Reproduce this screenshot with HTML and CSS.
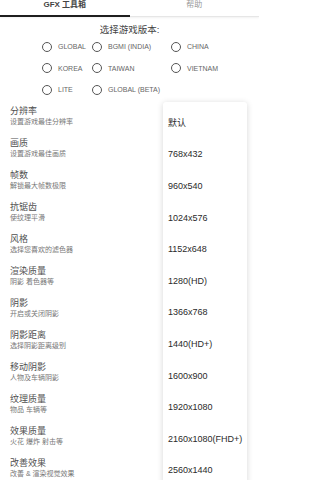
FILE: index.html
```html
<!DOCTYPE html>
<html lang="zh">
<head>
<meta charset="utf-8">
<title>GFX 工具箱</title>
<link rel="stylesheet" href="styles.css">
</head>
<body>
<div class="page">
  <nav class="tabs">
    <div class="tab active">GFX 工具箱</div>
    <div class="tab">帮助</div>
  </nav>

  <h2 class="version-title">选择游戏版本:</h2>
  <div class="radios">
    <label class="radio"><span class="circle"></span>GLOBAL</label>
    <label class="radio"><span class="circle"></span>BGMI (INDIA)</label>
    <label class="radio"><span class="circle"></span>CHINA</label>
    <label class="radio"><span class="circle"></span>KOREA</label>
    <label class="radio"><span class="circle"></span>TAIWAN</label>
    <label class="radio"><span class="circle"></span>VIETNAM</label>
    <label class="radio"><span class="circle"></span>LITE</label>
    <label class="radio"><span class="circle"></span>GLOBAL (BETA)</label>
  </div>

  <ul class="settings">
    <li class="setting"><div class="s-title">分辨率</div><div class="s-sub">设置游戏最佳分辨率</div></li>
    <li class="setting"><div class="s-title">画质</div><div class="s-sub">设置游戏最佳画质</div></li>
    <li class="setting"><div class="s-title">帧数</div><div class="s-sub">解锁最大帧数极限</div></li>
    <li class="setting"><div class="s-title">抗锯齿</div><div class="s-sub">使纹理平滑</div></li>
    <li class="setting"><div class="s-title">风格</div><div class="s-sub">选择您喜欢的滤色器</div></li>
    <li class="setting"><div class="s-title">渲染质量</div><div class="s-sub">阴影 着色器等</div></li>
    <li class="setting"><div class="s-title">阴影</div><div class="s-sub">开启或关闭阴影</div></li>
    <li class="setting"><div class="s-title">阴影距离</div><div class="s-sub">选择阴影距离级别</div></li>
    <li class="setting"><div class="s-title">移动阴影</div><div class="s-sub">人物及车辆阴影</div></li>
    <li class="setting"><div class="s-title">纹理质量</div><div class="s-sub">物品 车辆等</div></li>
    <li class="setting"><div class="s-title">效果质量</div><div class="s-sub">火花 爆炸 射击等</div></li>
    <li class="setting"><div class="s-title">改善效果</div><div class="s-sub">改善 &amp; 渲染视觉效果</div></li>
  </ul>

  <ul class="menu">
    <li class="menu-item">默认</li>
    <li class="menu-item">768x432</li>
    <li class="menu-item">960x540</li>
    <li class="menu-item">1024x576</li>
    <li class="menu-item">1152x648</li>
    <li class="menu-item">1280(HD)</li>
    <li class="menu-item">1366x768</li>
    <li class="menu-item">1440(HD+)</li>
    <li class="menu-item">1600x900</li>
    <li class="menu-item">1920x1080</li>
    <li class="menu-item">2160x1080(FHD+)</li>
    <li class="menu-item">2560x1440</li>
  </ul>
</div>
</body>
</html>
```

FILE: styles.css
```css
html, body {
  margin: 0;
  padding: 0;
  height: 100%;
  overflow: hidden;
  background: #ffffff;
}

body {
  font-family: "Liberation Sans", "Noto Sans CJK SC", sans-serif;
  color: #444;
}

.page {
  position: relative;
  width: 259px;
  height: 480px;
  overflow: hidden;
}

.tabs {
  display: flex;
  border-bottom: 1px solid #e6e6e6;
  box-shadow: 0 1px 2px rgba(0, 0, 0, 0.06);
}

.tab {
  flex: 1;
  text-align: center;
  font-size: 8px;
  line-height: 10px;
  padding-bottom: 5px;
  color: #9a9a9a;
  border-bottom: 2px solid transparent;
  margin-bottom: -1px;
}

.tab.active {
  color: #444;
  font-weight: bold;
  border-bottom-color: #1e1e1e;
}

.version-title {
  margin: 7px 0 0;
  text-align: center;
  font-size: 9.5px;
  line-height: 12px;
  font-weight: normal;
  color: #444;
}

.radios {
  display: grid;
  grid-template-columns: 50px 79px auto;
  grid-auto-rows: 21.5px;
  padding-left: 42px;
}

.radio {
  display: flex;
  align-items: center;
  gap: 6px;
  font-size: 7px;
  color: #666;
  white-space: nowrap;
}

.circle {
  width: 8px;
  height: 8px;
  border: 1.5px solid #555;
  border-radius: 50%;
  flex: none;
}

.settings {
  list-style: none;
  margin: 0;
  padding: 0 0 0 10px;
}

.setting {
  height: 32px;
  box-sizing: border-box;
  padding-top: 5px;
}

.s-title {
  font-size: 9px;
  line-height: 11px;
  color: #505050;
}

.s-sub {
  font-size: 7px;
  line-height: 9px;
  color: #777;
}

.menu {
  position: absolute;
  left: 163px;
  top: 102px;
  width: 84px;
  margin: 0;
  padding: 5px 0 0;
  list-style: none;
  background: #fff;
  border-radius: 3px;
  box-shadow: 0 1px 6px rgba(0, 0, 0, 0.16);
}

.menu-item {
  height: 31.6px;
  display: flex;
  align-items: center;
  padding-left: 5px;
  font-size: 9px;
  color: #2a2a2a;
  white-space: nowrap;
}
```
